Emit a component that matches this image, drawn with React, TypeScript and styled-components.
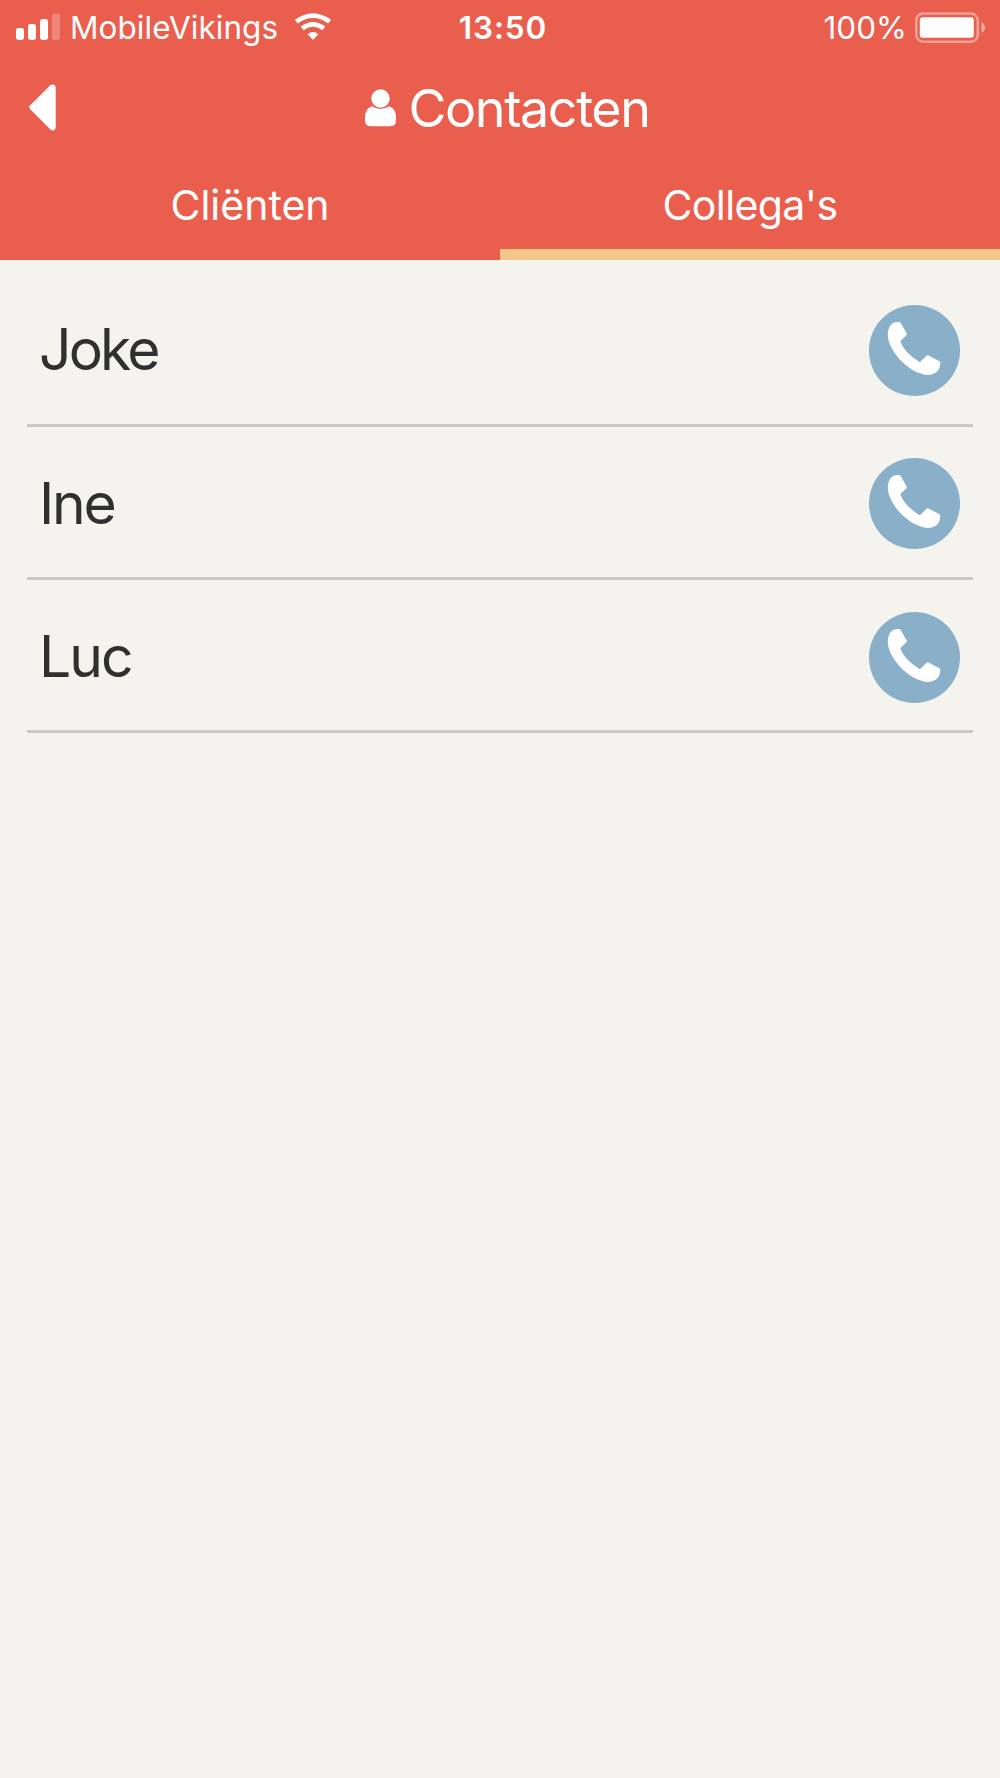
import React from 'react';
import styled, { createGlobalStyle } from 'styled-components';

const GlobalStyle = createGlobalStyle`
  * { box-sizing: border-box; }
  html, body { margin: 0; background: #f4f3ee; }
  body { font-family: Inter, "Liberation Sans", sans-serif; -webkit-font-smoothing: antialiased; }
`;

const Screen = styled.div`
  width: 1000px;
  min-height: 1778px;
  background: #f4f3ee;
`;

const Header = styled.header`
  height: 260px;
  background: #ea5e4e;
  color: #fff;
  display: flex;
  flex-direction: column;
`;

const StatusBar = styled.div`
  height: 54px;
  display: grid;
  grid-template-columns: 1fr 120px 1fr;
  padding: 0 14px 0 16px;
  line-height: 56px;
  font-size: 31.5px;
`;

const Carrier = styled.div`
  display: flex;
`;

const CarrierName = styled.span`
  margin-left: 8px;
  width: 224px;
  letter-spacing: 0.05px;
  white-space: nowrap;
`;

const Clock = styled.time`
  padding-left: 4px;
  text-align: center;
  font-weight: 600;
  letter-spacing: 0.9px;
`;

const Power = styled.div`
  display: flex;
  justify-content: flex-end;
`;

const Percentage = styled.span`
  margin-right: 8px;
  letter-spacing: 0px;
`;

const TitleBar = styled.div`
  height: 108px;
  display: grid;
  grid-template-columns: 60px 1fr 60px;
`;

const BackButton = styled.button`
  display: flex;
  align-items: flex-start;
  border: 0;
  padding: 30px 0 0 29px;
  background: none;
  color: inherit;
`;

const Title = styled.h1`
  margin: 0;
  padding-left: 15px;
  display: flex;
  justify-content: center;
  font-size: 52px;
  font-weight: 400;
  line-height: 110px;
  letter-spacing: -1.4px;
`;

const PersonIcon = styled.svg`
  margin: 35px 12px 0 0;
`;

const Tabs = styled.nav`
  height: 98px;
  display: grid;
  grid-template-columns: 1fr 1fr;
`;

const Tab = styled.button<{ $active?: boolean; $tracking: number }>`
  border: 0;
  border-bottom: 11px solid ${(p) => (p.$active ? '#f6c78a' : 'transparent')};
  padding: 0;
  background: none;
  color: #fff;
  font: 400 41px/87px Inter, "Liberation Sans", sans-serif;
  letter-spacing: ${(p) => p.$tracking}px;
`;

const ContactList = styled.ul`
  list-style: none;
  margin: 0;
  padding: 13.33px 27px 0;
`;

const Contact = styled.li`
  height: 153.33px;
  border-bottom: 3px solid #c9c9c8;
  padding: 4px 13px 0 12px;
  display: flex;
  align-items: center;
  justify-content: space-between;
`;

const Name = styled.span<{ $tracking: number }>`
  font-size: 57px;
  line-height: 90px;
  letter-spacing: ${(p) => p.$tracking}px;
  color: #303030;
`;

const CallButton = styled.button`
  width: 91px;
  height: 91px;
  border: 0;
  border-radius: 50%;
  padding: 0;
  background: #8aafc8;
  line-height: 0;
`;

const contacts = [
  { name: 'Joke', tracking: -2.8 },
  { name: 'Ine', tracking: -2.3 },
  { name: 'Luc', tracking: -2 },
];

const SignalIcon = () => (
  <svg width="46" height="54" fill="#fff">
    <rect x="0" y="28" width="8" height="12" rx="2.4" />
    <rect x="12" y="24" width="8" height="16" rx="2.4" />
    <rect x="24" y="19" width="8" height="21" rx="2.4" />
    <rect x="36" y="13.5" width="8" height="26.5" rx="2.4" opacity=".25" />
  </svg>
);

const WifiIcon = () => (
  <svg width="38" height="54" viewBox="0 0 38 54" fill="none" stroke="#fff" strokeWidth="4.8">
    <path d="M2.4 21.6Q19 9.6 35.6 21.6" />
    <path d="M8.2 28.4Q19 20.4 29.8 28.4" />
    <path d="M13.6 34.2Q19 29.8 24.4 34.2L19 40Z" fill="#fff" stroke="none" />
  </svg>
);

const BatteryIcon = () => (
  <svg width="71" height="54" fill="#fff">
    <rect x="1.2" y="13.5" width="61.6" height="28.2" rx="7" fill="none" stroke="#fff" strokeWidth="2.6" opacity=".42" />
    <rect x="4.8" y="17.2" width="54" height="20.6" rx="3" />
    <path d="M66.5 22.2Q70 24 70 27.5T66.5 32.8Z" opacity=".5" />
  </svg>
);

const PhoneIcon = () => (
  <svg width="91" height="91" viewBox="0 0 91 91" fill="#fff">
    <path d="M24 18Q27.5 16.5 30.5 17Q31.3 17.3 31.8 18.2L37.7 28.5Q38.2 29.5 37.4 30.3L31.2 36.2Q35.5 48 50.8 57.2L57.6 50.8Q58.5 50 59.7 50.5L70.4 56.2Q71.4 56.8 71.3 57.8C71.3 65.5 66.5 69.8 58.7 70C38.5 68.2 18.3 44.5 18.8 29Q19 21.2 24 18Z" />
  </svg>
);

export default function App() {
  return (
    <>
      <GlobalStyle />
      <Screen>
        <Header>
          <StatusBar>
            <Carrier>
              <SignalIcon />
              <CarrierName>MobileVikings</CarrierName>
              <WifiIcon />
            </Carrier>
            <Clock>13:50</Clock>
            <Power>
              <Percentage>100%</Percentage>
              <BatteryIcon />
            </Power>
          </StatusBar>
          <TitleBar>
            <BackButton aria-label="Terug">
              <svg width="27" height="47" viewBox="0 0 27 47" fill="currentColor">
                <path d="M1.2 21.2L21.2 1.2Q23 0 25 .8Q26.7 1.7 26.7 4V43Q26.7 45.5 25 46.2Q23 47 21.2 45.2L1.2 25.3Q-.7 23.2 1.2 21.2Z" />
              </svg>
            </BackButton>
            <Title>
              <PersonIcon width="31" height="38" viewBox="0 0 31 38" fill="currentColor">
                <ellipse cx="15.5" cy="9.5" rx="9.2" ry="9.3" />
                <path d="M7 17.2Q15.5 22.8 24 17.2Q31 19 31 29V31Q31 37.2 25.5 37.2H5.5Q0 37.2 0 31V29Q0 19 7 17.2Z" />
              </PersonIcon>
              Contacten
            </Title>
          </TitleBar>
          <Tabs>
            <Tab $tracking={0}>Cliënten</Tab>
            <Tab $active $tracking={-0.6}>Collega's</Tab>
          </Tabs>
        </Header>
        <ContactList>
          {contacts.map((c) => (
            <Contact key={c.name}>
              <Name $tracking={c.tracking}>{c.name}</Name>
              <CallButton aria-label={`Bel ${c.name}`}>
                <PhoneIcon />
              </CallButton>
            </Contact>
          ))}
        </ContactList>
      </Screen>
    </>
  );
}
